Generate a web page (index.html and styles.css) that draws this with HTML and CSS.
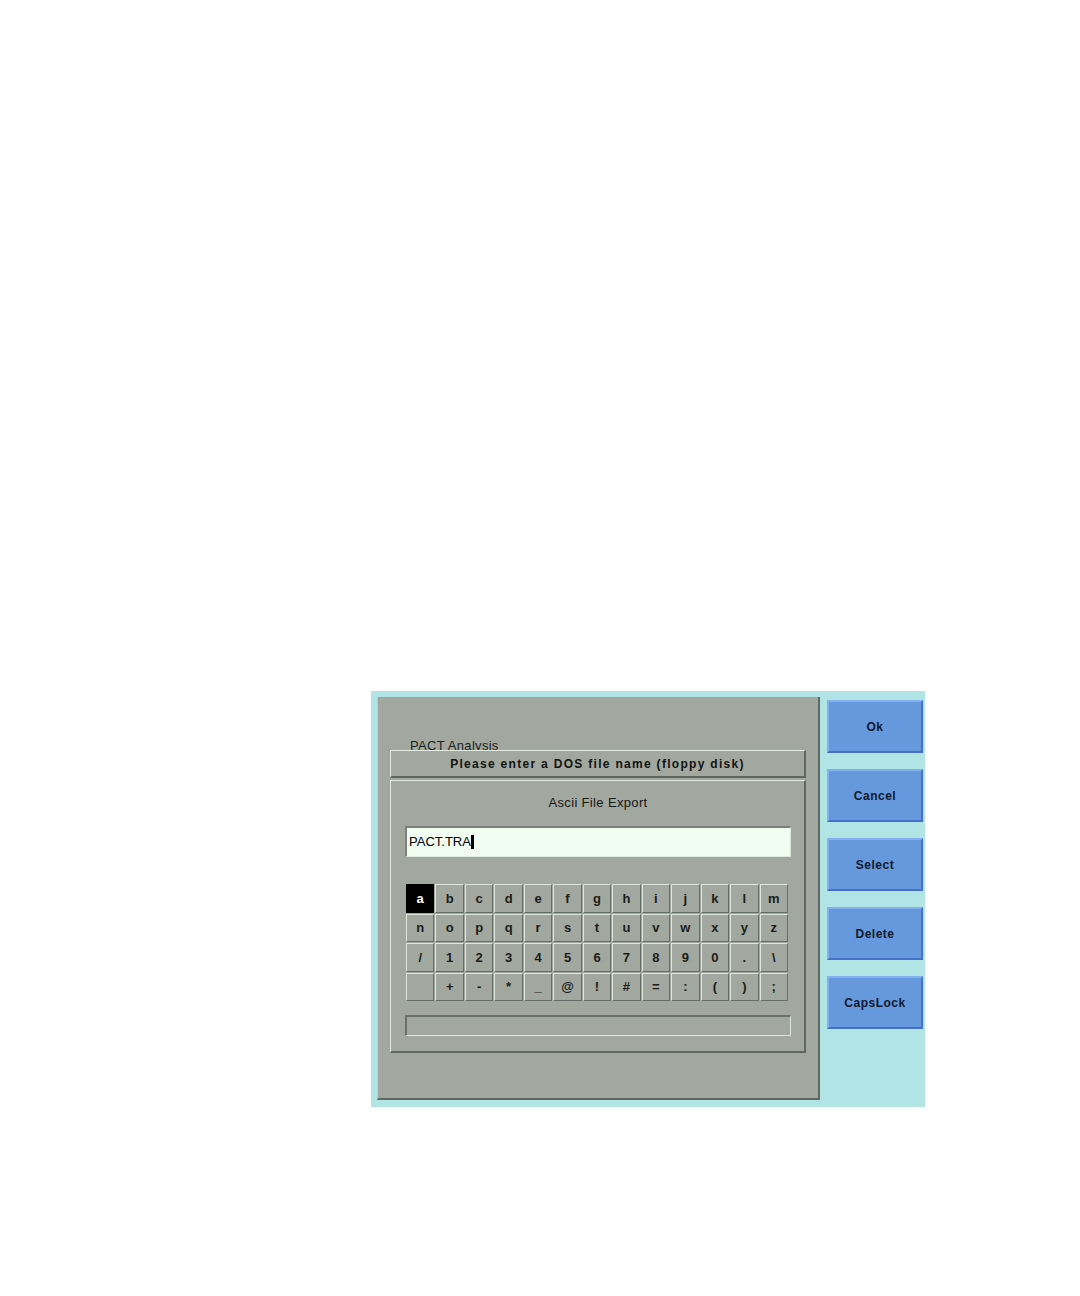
FILE: index.html
```html
<!DOCTYPE html>
<html>
<head>
<meta charset="utf-8">
<link rel="stylesheet" href="styles.css">
</head>
<body>
<div class="screen">
  <div class="panel">
    <div class="label"><span>PACT Analysis</span></div>
    <div class="titlebar">Please enter a DOS file name (floppy disk)</div>
    <div class="inner">
      <div class="heading">Ascii File Export</div>
      <div class="input"><span class="val">PACT.TRA</span><span class="cursor"></span></div>
      <div class="keys">
        <div class="key sel">a</div><div class="key">b</div><div class="key">c</div><div class="key">d</div><div class="key">e</div><div class="key">f</div><div class="key">g</div><div class="key">h</div><div class="key">i</div><div class="key">j</div><div class="key">k</div><div class="key">l</div><div class="key">m</div>
        <div class="key">n</div><div class="key">o</div><div class="key">p</div><div class="key">q</div><div class="key">r</div><div class="key">s</div><div class="key">t</div><div class="key">u</div><div class="key">v</div><div class="key">w</div><div class="key">x</div><div class="key">y</div><div class="key">z</div>
        <div class="key">/</div><div class="key">1</div><div class="key">2</div><div class="key">3</div><div class="key">4</div><div class="key">5</div><div class="key">6</div><div class="key">7</div><div class="key">8</div><div class="key">9</div><div class="key">0</div><div class="key">.</div><div class="key">\</div>
        <div class="key"></div><div class="key">+</div><div class="key">-</div><div class="key">*</div><div class="key">_</div><div class="key">@</div><div class="key">!</div><div class="key">#</div><div class="key">=</div><div class="key">:</div><div class="key">(</div><div class="key">)</div><div class="key">;</div>
      </div>
      <div class="status"></div>
    </div>
  </div>
  <div class="side">
    <div class="btn">Ok</div>
    <div class="btn">Cancel</div>
    <div class="btn">Select</div>
    <div class="btn">Delete</div>
    <div class="btn">CapsLock</div>
  </div>
</div>
</body>
</html>
```

FILE: styles.css
```css
html, body {
  margin: 0;
  padding: 0;
  background: #ffffff;
}
body {
  font-family: "Liberation Sans", Arial, sans-serif;
}
.screen {
  box-sizing: border-box;
  margin: 691px 0 0 371px;
  width: 554px;
  height: 416px;
  background: #b1e4e4;
  padding: 6px 0 0 6px;
  display: flex;
  align-items: flex-start;
}
.panel {
  box-sizing: border-box;
  width: 443px;
  height: 403px;
  background: #a2a79f;
  border-left: 1px solid #c4cac2;
  border-right: 2px solid #5f6761;
  border-bottom: 2px solid #5f6761;
  padding: 0 12px 0 12px;
  display: flex;
  flex-direction: column;
}
.label {
  box-sizing: border-box;
  height: 53px;
  overflow: hidden;
  padding: 41px 0 0 20px;
  font-size: 13px;
  line-height: 15px;
  letter-spacing: 0.3px;
  color: #1c1f1c;
}
.titlebar {
  box-sizing: border-box;
  height: 28px;
  border-top: 1px solid #e2eae1;
  border-left: 1px solid #e2eae1;
  border-bottom: 2px solid #5f6761;
  border-right: 2px solid #5f6761;
  display: flex;
  align-items: center;
  justify-content: center;
  font-weight: bold;
  font-size: 12px;
  letter-spacing: 1.3px;
  color: #111311;
}
.inner {
  box-sizing: border-box;
  margin-top: 2px;
  height: 273px;
  border-top: 1px solid #e2eae1;
  border-left: 1px solid #e2eae1;
  border-bottom: 2px solid #5f6761;
  border-right: 2px solid #5f6761;
  padding: 14px 13px 0 14px;
  display: flex;
  flex-direction: column;
}
.heading {
  text-align: center;
  font-size: 13px;
  line-height: 16px;
  letter-spacing: 0.35px;
  color: #151815;
}
.input {
  box-sizing: border-box;
  margin-top: 15px;
  height: 31px;
  background: #f1fdf1;
  border-top: 2px solid #7b827b;
  border-left: 2px solid #7b827b;
  border-bottom: 1px solid #dfe8de;
  border-right: 1px solid #dfe8de;
  display: flex;
  align-items: center;
  padding-left: 2px;
  padding-bottom: 1px;
  font-size: 13px;
  color: #000;
}
.cursor {
  display: inline-block;
  width: 3px;
  height: 14px;
  background: #000;
}
.keys {
  margin: 27px 0 0 1px;
  width: 382px;
  height: 117px;
  display: grid;
  grid-template-columns: repeat(13, 1fr);
  grid-template-rows: repeat(4, 1fr);
  gap: 1px;
}
.key {
  box-sizing: border-box;
  border-top: 1px solid #dde6dc;
  border-left: 1px solid #dde6dc;
  border-bottom: 1px solid #666d67;
  border-right: 1px solid #666d67;
  display: flex;
  align-items: center;
  justify-content: center;
  font-weight: bold;
  font-size: 13px;
  color: #1a1d1a;
}
.key.sel {
  background: #000;
  color: #fff;
  border-color: #000;
}
.status {
  box-sizing: border-box;
  margin-top: 14px;
  height: 21px;
  border-top: 2px solid #6a716a;
  border-left: 2px solid #6a716a;
  border-bottom: 1px solid #dfe8de;
  border-right: 1px solid #dfe8de;
}
.side {
  margin-left: 7px;
  padding-top: 3px;
  display: flex;
  flex-direction: column;
  gap: 16px;
}
.btn {
  box-sizing: border-box;
  width: 96px;
  height: 53px;
  background: #6698dd;
  border-top: 2px solid #84b0ef;
  border-left: 2px solid #84b0ef;
  border-bottom: 2px solid #4470cc;
  border-right: 2px solid #4470cc;
  display: flex;
  align-items: center;
  justify-content: center;
  font-weight: bold;
  font-size: 12px;
  letter-spacing: 0.5px;
  color: #0f1a2c;
}
```
